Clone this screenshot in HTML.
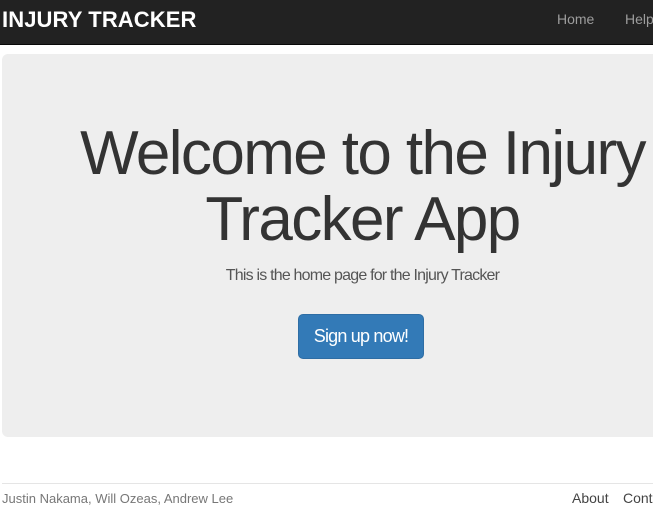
<!DOCTYPE html>
<html><head><style>
body{margin:0;width:653px;height:520px;overflow:hidden;background:#fff;font-family:"Liberation Sans",sans-serif;position:relative}
.nav{position:absolute;left:0;top:0;width:653px;height:44px;background:#222;border-bottom:1px solid #080808}
.brand{position:absolute;left:2px;top:7px;color:#fff;font-weight:bold;font-size:22px;letter-spacing:0.1px}
.nl{position:absolute;top:11px;color:#9d9d9d;font-size:14px}
.jum{position:absolute;left:2px;top:54px;width:670px;height:383px;background:#eee;border-radius:6px}
h1{position:absolute;left:0;width:725px;top:121px;margin:0;text-align:center;font-weight:normal;font-size:62px;line-height:66px;color:#333;letter-spacing:-1.6px}
.sub{position:absolute;left:0;width:725px;top:267px;text-align:center;font-size:16px;color:#555;letter-spacing:-0.8px}
.btn{position:absolute;left:298px;top:314px;width:126px;height:45px;background:#337ab7;border:1px solid #2e6da4;border-radius:5px;box-sizing:border-box;color:#fff;font-size:18px;line-height:43px;text-align:center;letter-spacing:-0.8px}
.hr{position:absolute;left:2px;top:483px;width:660px;border-top:1px solid #e5e5e5}
.ft{position:absolute;top:491px;font-size:13px;color:#777}
.fl{position:absolute;top:490px;font-size:14px;color:#444}
</style></head><body>
<div class="nav"><div class="brand">INJURY TRACKER</div><div class="nl" style="left:557px">Home</div><div class="nl" style="left:625px">Help</div></div>
<div class="jum"></div>
<h1>Welcome to the Injury<br>Tracker App</h1>
<div class="sub">This is the home page for the Injury Tracker</div>
<div class="btn">Sign up now!</div>
<div class="hr"></div>
<div class="ft" style="left:2px">Justin Nakama, Will Ozeas, Andrew Lee</div>
<div class="fl" style="left:572px">About</div><div class="fl" style="left:623px">Contact</div>
</body></html>
